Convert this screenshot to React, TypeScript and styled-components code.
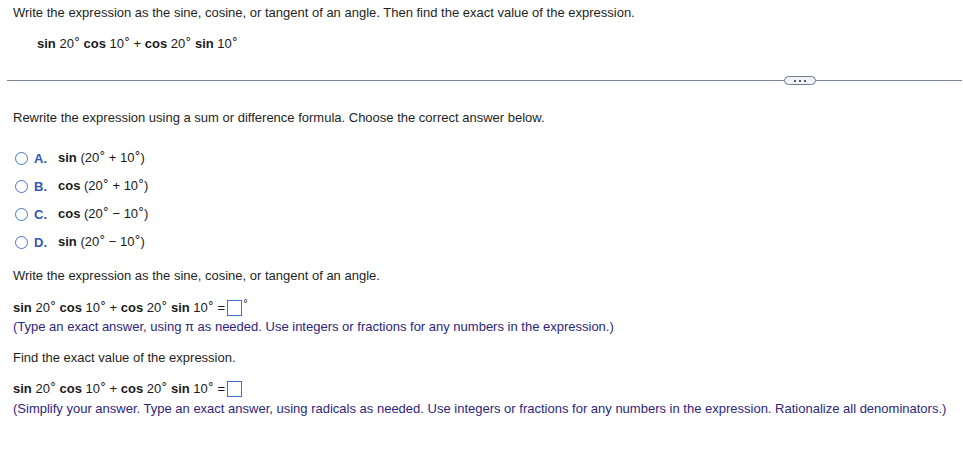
import styled, { createGlobalStyle } from "styled-components";

const GlobalStyle = createGlobalStyle`
	body {
		margin: 0;
		background: #fff;
		font-family: "Liberation Sans", Arial, sans-serif;
		font-size: 13px;
		color: #1f1f1f;
	}
`;

const options = [
	{ letter: "A.", fn: "sin", op: "+" },
	{ letter: "B.", fn: "cos", op: "+" },
	{ letter: "C.", fn: "cos", op: "\u2212" },
	{ letter: "D.", fn: "sin", op: "\u2212" },
];

const Deg = () => <DegMark>°</DegMark>;

const Expression = () => (
	<>
		<Fn>sin</Fn> 20<Deg /> <Fn>cos</Fn> 10<Deg /> + <Fn>cos</Fn> 20<Deg />{" "}
		<Fn>sin</Fn> 10<Deg />
	</>
);

const App = () => {
	return (
		<Page>
			<GlobalStyle />
			<Text $top={5}>
				Write the expression as the sine, cosine, or tangent of an angle. Then
				find the exact value of the expression.
			</Text>
			<Math $top={15} $indent={24}>
				<Expression />
			</Math>

			<Divider>
				<Line />
				<Pill>
					<Dot />
					<Dot />
					<Dot />
				</Pill>
				<RightLine />
			</Divider>

			<Text $top={25}>
				Rewrite the expression using a sum or difference formula. Choose the
				correct answer below.
			</Text>

			<Options>
				{options.map((o) => (
					<Option key={o.letter}>
						<Radio />
						<Letter>{o.letter}</Letter>
						<Math>
							<Fn>{o.fn}</Fn> (20<Deg /> {o.op} 10<Deg />)
						</Math>
					</Option>
				))}
			</Options>

			<Text $top={18}>
				Write the expression as the sine, cosine, or tangent of an angle.
			</Text>
			<Math $top={16}>
				<Expression /> =<AnswerBox />
				<BoxDeg>°</BoxDeg>
			</Math>
			<Hint $top={3}>
				(Type an exact answer, using π as needed. Use integers or fractions for
				any numbers in the expression.)
			</Hint>

			<Text $top={15}>Find the exact value of the expression.</Text>
			<Math $top={15}>
				<Expression /> =<AnswerBox />
			</Math>
			<Hint $top={4}>
				(Simplify your answer. Type an exact answer, using radicals as needed.
				Use integers or fractions for any numbers in the expression. Rationalize
				all denominators.)
			</Hint>
		</Page>
	);
};

const Page = styled.div`
	padding: 0 1px 40px 7px;
`;

const Text = styled.div<{ $top?: number }>`
	margin-top: ${(p) => p.$top ?? 0}px;
	padding-left: 6px;
	line-height: 16px;
	white-space: nowrap;
`;

const Hint = styled(Text)`
	color: #2d2680;
`;

const Math = styled.div<{ $top?: number; $indent?: number }>`
	margin-top: ${(p) => p.$top ?? 0}px;
	padding-left: ${(p) => 6 + (p.$indent ?? 0)}px;
	line-height: 16px;
	height: 16px;
	font-size: 13px;
	color: #1a1a1a;
	white-space: nowrap;
`;

const Fn = styled.span`
	font-weight: bold;
`;

const DegMark = styled.span`
	font-family: "DejaVu Sans", sans-serif;
	font-weight: normal;
	font-size: 12px;
	position: relative;
	top: -2px;
`;

const BoxDeg = styled(DegMark)`
	font-size: 10px;
	top: -4px;
	vertical-align: top;
	margin-left: 1px;
`;

const AnswerBox = styled.span`
	display: inline-block;
	vertical-align: middle;
	width: 13px;
	height: 14px;
	border: 1.5px solid #3f6fd0;
	margin-left: 2px;
	position: relative;
	top: -1px;
`;

const Divider = styled.div`
	margin-top: 24px;
	display: flex;
	align-items: center;
	height: 9px;
`;

const Line = styled.div`
	flex: 1;
	height: 1px;
	background: #7c8597;
`;

const RightLine = styled(Line)`
	flex: 0 0 146px;
`;

const Pill = styled.div`
	width: 30px;
	height: 7px;
	border: 1px solid #6f7a8c;
	border-radius: 5px;
	background: #f1f3f6;
	display: flex;
	align-items: center;
	justify-content: center;
	gap: 3px;
`;

const Dot = styled.span`
	width: 2px;
	height: 2px;
	background: #55606f;
`;

const Options = styled.div`
	margin-top: 24px;
	display: flex;
	flex-direction: column;
	gap: 12px;
`;

const Option = styled.div`
	display: flex;
	align-items: center;
	height: 16px;
	padding-left: 8px;

	& > div {
		padding-left: 0;
	}
`;

const Radio = styled.span`
	width: 11px;
	height: 11px;
	border: 1px solid #4d74c9;
	border-radius: 50%;
	flex-shrink: 0;
`;

const Letter = styled.span`
	width: 24px;
	margin-left: 6px;
	color: #3556bb;
	font-size: 13px;
	font-weight: bold;
`;

export default App;
